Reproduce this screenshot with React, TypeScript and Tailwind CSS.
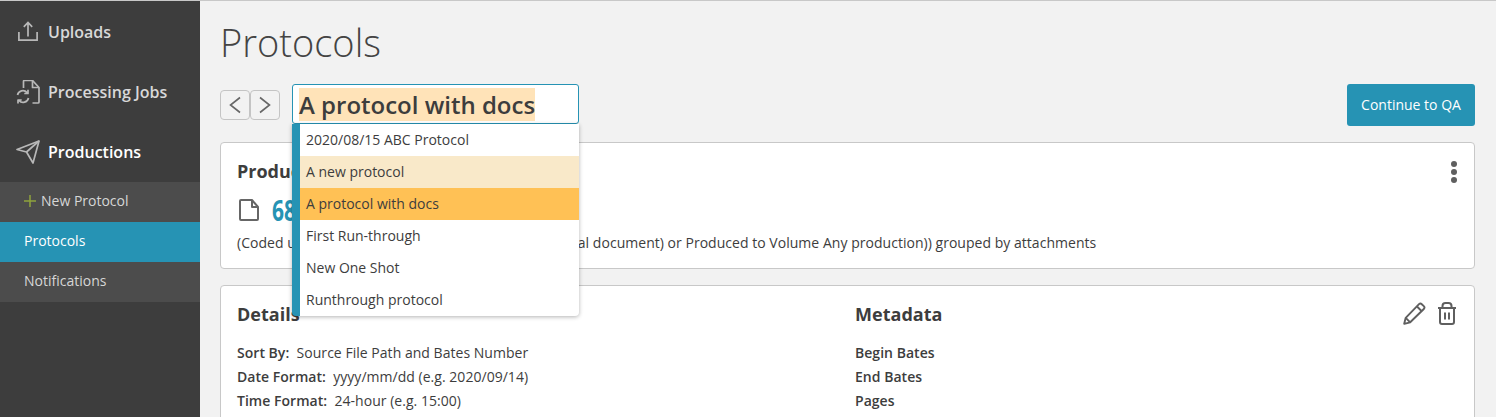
import { ReactNode } from "react";

const font = { fontFamily: '"Open Sans", "Noto Sans", sans-serif' };

const protocols = [
  "2020/08/15 ABC Protocol",
  "A new protocol",
  "A protocol with docs",
  "First Run-through",
  "New One Shot",
  "Runthrough protocol",
];

function UploadIcon() {
  return (
    <svg width="24" height="24" viewBox="0 0 24 24" fill="none" stroke="currentColor" strokeWidth="1.700">
      <path d="M2.900 12v8.200h18.200V12" />
      <path d="M12 16.500V2.500M7.800 6.800 12 2.500l4.200 4.300" />
    </svg>
  );
}

function JobsIcon() {
  return (
    <svg width="24" height="24" viewBox="0 0 24 24" fill="none" stroke="currentColor" strokeWidth="1.700" strokeLinejoin="round">
      <path d="M7.500 8V1.500a1 1 0 0 1 1-1H16.500L23 7.500V22a1 1 0 0 1-1 1h-5.500" />
      <path d="M16.500 .5v7H23" />
      <path d="M1.500 15a5.500 5.500 0 0 1 9.500-2.500M12 9.800V13.500H8.300" />
      <path d="M12.500 18a5.500 5.500 0 0 1-9.500 2.500M2 23.500v-3.500h3.700" />
    </svg>
  );
}

function SendIcon() {
  return (
    <svg width="24" height="24" viewBox="0 0 24 24" fill="none" stroke="currentColor" strokeWidth="1.700" strokeLinejoin="round">
      <path d="M23 1 1 9.500 10.500 12 17 23Z" />
      <path d="M23 1 10.500 12" />
    </svg>
  );
}

function MenuLink({ icon, label, active }: { icon: ReactNode; label: string; active?: boolean }) {
  return (
    <div className={`flex h-[60px] items-center pl-[16px] text-[16px] font-semibold ${active ? "text-white" : "text-[#d8d8d8]"}`}>
      <span className="flex w-[32px] text-[#b8b8b8]">{icon}</span>
      {label}
    </div>
  );
}

function Sidebar() {
  return (
    <aside className="w-[200px] shrink-0 border-t border-[#3d3d3d] bg-[#3d3d3d]">
      <MenuLink icon={<UploadIcon />} label="Uploads" />
      <MenuLink icon={<JobsIcon />} label="Processing Jobs" />
      <MenuLink icon={<SendIcon />} label="Productions" active />
      <div className="bg-[#4c4c4c] text-[14px] text-[#d6d6d6]">
        <div className="flex h-[40px] items-center pb-[3px] pl-[24px]">
          <svg className="mr-[5px]" width="12" height="12" viewBox="0 0 12 12" stroke="#8fa33c" strokeWidth="1.500">
            <path d="M6 0v12M0 6h12" />
          </svg>
          New Protocol
        </div>
        <div className="flex h-[40px] items-center bg-[#2693b4] pb-[3px] pl-[24px] text-white">Protocols</div>
        <div className="flex h-[40px] items-center pb-[3px] pl-[24px]">Notifications</div>
      </div>
    </aside>
  );
}

function ProtocolSelect() {
  return (
    <div className="relative ml-[12px] w-[287px]">
      <div className="flex h-[40px] items-center rounded-[3px] border border-[#2693b4] bg-white pl-[6px] text-[24px] font-semibold text-[#3d3d3d]">
        <span className="bg-[#ffe3b8] leading-[33px]">A protocol with docs</span>
      </div>
      <div className="absolute left-0 top-[40px] z-10 w-[287px] overflow-hidden rounded-b-[4px] border-l-[8px] border-[#2693b4] bg-white text-[14px] text-[#3d3d3d] shadow-[0_1px_4px_rgba(0,0,0,0.3)]">
        {protocols.map((name, i) => (
          <div
            key={name}
            className={`flex h-[32px] items-center pb-[2px] pl-[6px] ${i === 1 ? "bg-[#f9e9c9]" : i === 2 ? "bg-[#ffc155]" : ""}`}
          >
            {name}
          </div>
        ))}
      </div>
    </div>
  );
}

function Chevron({ d }: { d: string }) {
  return (
    <button className="flex h-[30px] w-[30px] items-center justify-center rounded-[4px] border border-[#c4c4c4] bg-[#f2f2f2] text-[#666]">
      <svg width="14" height="18" viewBox="0 0 14 18" fill="none" stroke="currentColor" strokeWidth="1.600">
        <path d={d} />
      </svg>
    </button>
  );
}

export default function App() {
  return (
    <div style={font} className="flex h-[417px] w-[1496px] overflow-hidden border-t border-[#c8c8c8] bg-[#f2f2f2] text-[#3d3d3d]">
      <Sidebar />
      <main className="flex-1 pl-[20px] pr-[21px]">
        <h1 className="mt-[16px] h-[50px] text-[38px] font-light leading-[50px] text-[#444]">Protocols</h1>
        <div className="mt-[17px] flex items-start">
          <div className="mt-[6px] flex">
            <Chevron d="M12 1.500 2.500 9l9.500 7.500" />
            <Chevron d="M2 1.500 11.500 9 2 16.500" />
          </div>
          <ProtocolSelect />
          <button className="ml-auto h-[42px] w-[128px] rounded-[3px] bg-[#2693b4] pb-[2px] text-[14px] text-white">Continue to QA</button>
        </div>

        <section className="relative mt-[16px] h-[127px] rounded-[4px] border border-[#c8c8c8] bg-white pl-[16px] pt-[16px]">
          <h2 className="text-[18px] font-bold leading-[24px]">Production Population</h2>
          <div className="mt-[11px] flex h-[32px] items-center">
            <svg className="ml-[2px]" width="20" height="22" viewBox="0 0 20 22" fill="none" stroke="#666" strokeWidth="2" strokeLinejoin="round">
              <path d="M2 1h11l6 7v12a1 1 0 0 1-1 1H2a1 1 0 0 1-1-1V2a1 1 0 0 1 1-1Z" />
              <path d="M13 1v7h6" />
            </svg>
            <span className="ml-[13px] origin-left scale-x-[0.75] text-[28px] font-bold leading-[30px] text-[#2693b4]">6842 documents</span>
          </div>
          <p className="mt-[7px] whitespace-nowrap text-[14px] leading-[20px] tracking-[0.03px]">
            (Coded under Responsive or (Is a parent of an original document) or Produced to Volume Any production)) grouped by attachments
          </p>
          <div className="absolute right-[17px] top-[18px] flex flex-col gap-[2px]">
            <span className="h-[6px] w-[6px] rounded-full bg-[#5f5f5f]" />
            <span className="h-[6px] w-[6px] rounded-full bg-[#5f5f5f]" />
            <span className="h-[6px] w-[6px] rounded-full bg-[#5f5f5f]" />
          </div>
        </section>

        <section className="relative mt-[16px] flex h-[200px] rounded-[4px] border border-[#c8c8c8] bg-white pl-[16px] pt-[16px] text-[14px] tracking-[0.03px]">
          <div className="w-[618px]">
            <h2 className="text-[18px] font-bold leading-[24px]">Details</h2>
            <div className="mt-[15px] leading-[24px]">
              <div><b className="font-semibold">Sort By:</b>&nbsp; Source File Path and Bates Number</div>
              <div><b className="font-semibold">Date Format:</b>&nbsp; yyyy/mm/dd (e.g. 2020/09/14)</div>
              <div><b className="font-semibold">Time Format:</b>&nbsp; 24-hour (e.g. 15:00)</div>
            </div>
          </div>
          <div>
            <h2 className="text-[18px] font-bold leading-[24px]">Metadata</h2>
            <div className="mt-[15px] font-semibold leading-[24px]">
              <div>Begin Bates</div>
              <div>End Bates</div>
              <div>Pages</div>
            </div>
          </div>
          <div className="absolute right-[17px] top-[16px] flex items-center gap-[11px] text-[#5f5f5f]">
            <svg width="23" height="23" viewBox="0 0 23 23" fill="none" stroke="currentColor" strokeWidth="1.900" strokeLinejoin="round">
              <path d="M1.200 21.800l1.500-6L16 2.200a2 2 0 0 1 2.800 0l2 2a2 2 0 0 1 0 2.800L7.200 20.300Z" />
              <path d="M14 4.500 18.500 9M2.700 15.800l4.500 4.500" />
            </svg>
            <svg width="20" height="23" viewBox="0 0 20 23" fill="none" stroke="currentColor" strokeWidth="2" strokeLinejoin="round">
              <path d="M1 6h18M5.500 5.500V4A3 3 0 0 1 8.500 1h3a3 3 0 0 1 3 3v1.500" />
              <path d="M3 6v14a2 2 0 0 0 2 2h10a2 2 0 0 0 2-2V6" />
              <path d="M8 10.500v7M12 10.500v7" />
            </svg>
          </div>
        </section>
      </main>
    </div>
  );
}
